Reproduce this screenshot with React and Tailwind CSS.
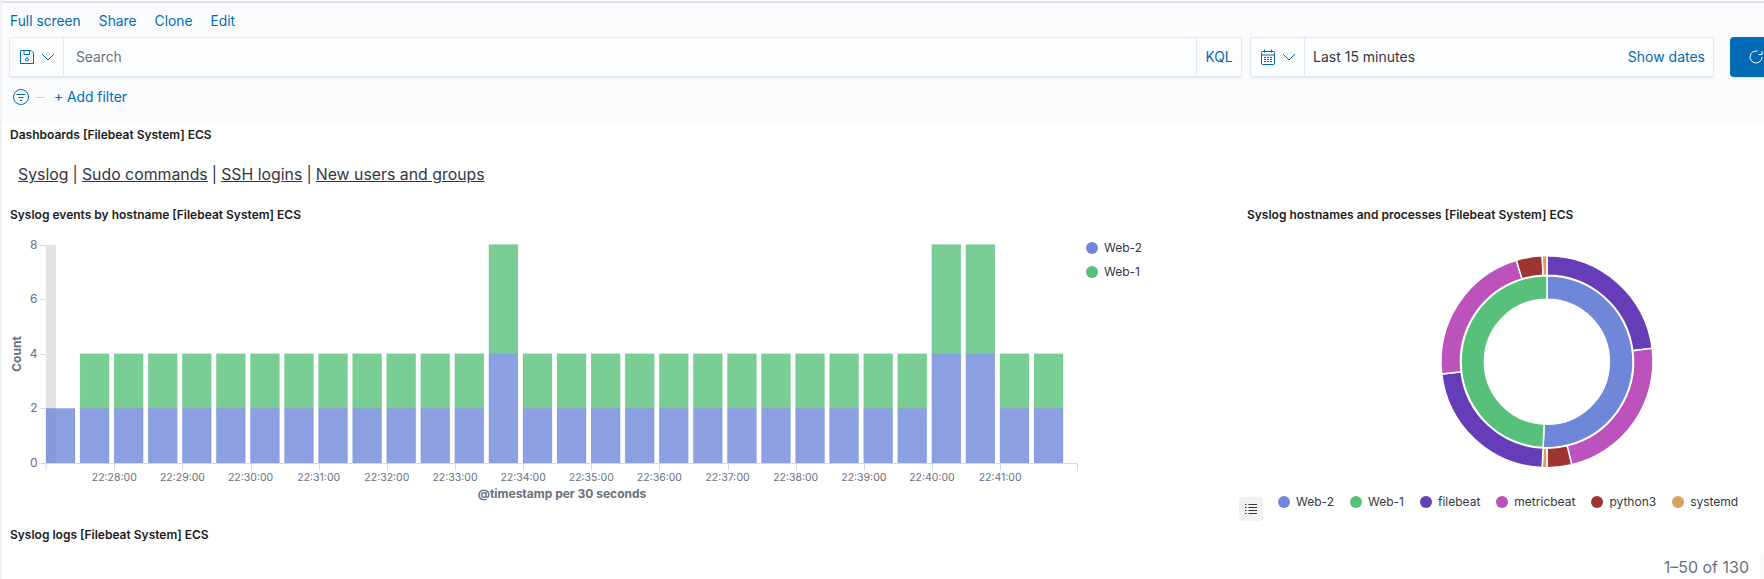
import React from "react";

const BLUE = "#6f87d8";
const GREEN = "#57c17b";
const PURPLE = "#663db8";
const PINK = "#bc52bc";
const RED = "#9e3533";
const ORANGE = "#daa05d";

const heights = Array.from({ length: 30 }, (_, i) => (i === 0 ? 2 : i === 13 || i === 26 || i === 27 ? 8 : 4));
const ticks = Array.from({ length: 14 }, (_, i) => ({
  x: 114.3 + i * 68.14,
  label: `22:${28 + i}:00`,
}));

function arc(cx, cy, r0, r1, a0, a1) {
  const p = (r, a) => {
    const t = (a * Math.PI) / 180;
    return `${(cx + r * Math.sin(t)).toFixed(2)} ${(cy - r * Math.cos(t)).toFixed(2)}`;
  };
  const large = a1 - a0 > 180 ? 1 : 0;
  return `M${p(r1, a0)}A${r1} ${r1} 0 ${large} 1 ${p(r1, a1)}L${p(r0, a1)}A${r0} ${r0} 0 ${large} 0 ${p(r0, a0)}Z`;
}

const innerRing = [
  [0, 182.6, BLUE],
  [182.6, 360, GREEN],
];
const outerRing = [
  [0, 82.7, PURPLE],
  [82.7, 166.5, PINK],
  [166.5, 180, RED],
  [180, 182.6, ORANGE],
  [182.6, 263.3, PURPLE],
  [263.3, 343.2, PINK],
  [343.2, 357.4, RED],
  [357.4, 360, ORANGE],
];

const legend = [
  ["Web-2", BLUE],
  ["Web-1", GREEN],
  ["filebeat", PURPLE],
  ["metricbeat", PINK],
  ["python3", RED],
  ["systemd", ORANGE],
];

function SaveIcon() {
  return (
    <svg width="16" height="16" viewBox="0 0 16 16" fill="none" stroke="#006bb4" strokeWidth="1">
      <path d="M2 1.5h10l2.500 2.500v10.500H1.500V2a.5.5 0 0 1 .5-.5z" />
      <path d="M5 1.500v4h5.500v-4" />
      <circle cx="8" cy="10.500" r="1.500" />
    </svg>
  );
}

function Chevron() {
  return (
    <svg width="14" height="8" viewBox="0 0 14 8" fill="none" stroke="#006bb4" strokeWidth="1">
      <path d="M1 1l6 6 6-6" />
    </svg>
  );
}

function CalendarIcon() {
  return (
    <svg width="16" height="16" viewBox="0 0 16 16" fill="none" stroke="#006bb4" strokeWidth="1">
      <rect x="1.500" y="2.500" width="13" height="13" rx="1" />
      <path d="M1.500 6h13M4.500 .5v3M11.500 .5v3" />
      <path d="M4 8.500h8M4 10.500h8M4 12.500h8" strokeDasharray="2 1" />
    </svg>
  );
}

function FilterIcon() {
  return (
    <svg width="16" height="16" viewBox="0 0 16 16" fill="none" stroke="#006bb4" strokeWidth="1">
      <circle cx="8" cy="8" r="7.500" />
      <path d="M3.500 5.500h9M5.500 8.500h5M7 11.500h2" />
    </svg>
  );
}

function RefreshIcon() {
  return (
    <svg width="14" height="14" viewBox="0 0 14 14" fill="none" stroke="#ffffff" strokeWidth="1">
      <path d="M8.500 1.200A6 6 0 1 0 13 7" />
      <path d="M13 1v3.500H9.500" />
    </svg>
  );
}

function ListIcon() {
  return (
    <svg width="12" height="10" viewBox="0 0 12 10" fill="none" stroke="#343741" strokeWidth="1">
      <path d="M3.500 .5H12M3.500 3.500H12M3.500 6.500H12M3.500 9.500H12" />
      <path d="M0 .5h1.500M0 3.500h1.500M0 6.500h1.500M0 9.500h1.500" />
    </svg>
  );
}

function BarChart() {
  const y0 = 463;
  const u = 27.3;
  const tickFill = "#69707d";
  return (
    <svg width="1084" height="285" viewBox="2 228 1084 285" className="block shrink-0" style={{ fontFamily: "Inter, sans-serif" }}>
      <rect x="46" y="245" width="10" height="218" fill="#e3e3e3" />
      {heights.map((h, i) => {
        const x = 46 + i * 34.07;
        const blueH = Math.min(h, i === 0 ? 2 : h / 2) * u;
        const greenH = h * u - blueH;
        return (
          <g key={i}>
            {greenH > 0 && (
              <rect x={x} y={y0 - h * u} width="29" height={greenH} fill={GREEN} fillOpacity="0.8" stroke={GREEN} strokeOpacity="0.2" />
            )}
            <rect x={x} y={y0 - blueH} width="29" height={blueH} fill={BLUE} fillOpacity="0.8" stroke={BLUE} strokeOpacity="0.2" />
          </g>
        );
      })}
      <path d="M46 463.500H1077.500" stroke="#d3dae6" strokeWidth="1" />
      <path d="M46 463.500v7M1077.500 463.500v7" stroke="#d3dae6" strokeWidth="1" />
      {ticks.map((t) => (
        <g key={t.label}>
          <path d={`M${Math.round(t.x) + 0.5} 463.500v7`} stroke="#d3dae6" strokeWidth="1" />
          <text x={t.x} y="481" textAnchor="middle" fontSize="10.500" fill={tickFill}>
            {t.label}
          </text>
        </g>
      ))}
      {[0, 2, 4, 6, 8].map((v) => (
        <g key={v}>
          <path d={`M40 ${Math.round(y0 - v * u) + 0.5}H46`} stroke="#d3dae6" strokeWidth="1" />
          <text x="37.500" y={y0 - v * u + 4} textAnchor="end" fontSize="12" fill={tickFill}>
            {v}
          </text>
        </g>
      ))}
      <text x="562" y="498" textAnchor="middle" fontSize="12" fontWeight="700" fill={tickFill}>
        @timestamp per 30 seconds
      </text>
      <text transform="translate(20.500 354) rotate(-90)" textAnchor="middle" fontSize="12" fontWeight="700" fill={tickFill}>
        Count
      </text>
    </svg>
  );
}

function Donut() {
  const cx = 1547;
  const cy = 361.700;
  return (
    <svg width="240" height="240" viewBox="1427 241 240 240" className="block">
      {innerRing.map(([a, b, c]) => (
        <path key={a} d={arc(cx, cy, 62.5, 86, a, b)} fill={c} stroke="#fff" strokeWidth="1.500" />
      ))}
      {outerRing.map(([a, b, c]) => (
        <path key={a} d={arc(cx, cy, 86.500, 106, a, b)} fill={c} stroke="#fff" strokeWidth="1.500" />
      ))}
    </svg>
  );
}

export default function App() {
  return (
    <div className="flex h-[579px] w-full overflow-hidden bg-white font-['Inter',sans-serif] text-[#343741]">
      <div className="w-[2px] shrink-0 bg-[#f1f2f4]" />
      <div className="flex min-w-0 flex-1 flex-col">
        <div className="h-[3px] shrink-0 border-b-2 border-[#dfe2e9] bg-white" />

        <header className="h-[119px] shrink-0 bg-[#fafbfd] text-[13.8px] text-[#006bb4]">
          <nav className="flex h-[34px] items-center gap-[18px] pl-2 pt-[2px]">
            <a>Full screen</a>
            <a>Share</a>
            <a>Clone</a>
            <a>Edit</a>
          </nav>

          <div className="flex h-10 items-stretch pl-[7px]">
            <div className="flex h-10 w-[1233px] shrink-0 border border-[#e4e8f0] bg-[#fcfdfe] shadow-[0_2px_2px_-1px_rgba(152,162,179,0.25)]">
              <div className="flex w-[54px] items-center gap-[6px] border-r border-[#e4e8f0] pl-[9px]">
                <SaveIcon />
                <Chevron />
              </div>
              <div className="flex flex-1 items-center pl-3 text-[#69707d]">Search</div>
              <div className="flex w-[45px] items-center justify-center border-l border-[#e4e8f0]">KQL</div>
            </div>

            <div className="ml-2 flex h-10 w-[464px] shrink-0 border border-[#e4e8f0] bg-[#fcfdfe] text-sm shadow-[0_2px_2px_-1px_rgba(152,162,179,0.25)]">
              <div className="flex w-[54px] items-center gap-[6px] border-r border-[#e4e8f0] pl-[9px]">
                <CalendarIcon />
                <Chevron />
              </div>
              <div className="flex flex-1 items-center justify-between pl-2 pr-2">
                <span className="text-[#343741]">Last 15 minutes</span>
                <span>Show dates</span>
              </div>
            </div>

            <button className="ml-4 flex h-10 w-[112px] shrink-0 items-center rounded-[4px] bg-[#006bb4] pl-[19px] shadow-[0_2px_2px_-1px_rgba(152,162,179,0.3)]">
              <RefreshIcon />
            </button>
          </div>

          <div className="flex h-10 items-center pl-[11px]">
            <FilterIcon />
            <span className="ml-[6px] h-px w-[10px] bg-[#d3dae6]" />
            <a className="ml-[9px]">+ Add filter</a>
          </div>
        </header>

        <div className="flex h-[26px] shrink-0 items-center pl-2 text-xs font-semibold text-[#1a1c21]">
          Dashboards [Filebeat System] ECS
        </div>

        <div className="flex h-[54px] shrink-0 items-center whitespace-pre pl-[16px] text-[15.85px] text-[#343741]">
          <a className="underline">Syslog</a>
          <span className="-mx-[0.4px]"> | </span>
          <a className="underline">Sudo commands</a>
          <span className="-mx-[0.4px]"> | </span>
          <a className="underline">SSH logins</a>
          <span className="-mx-[0.4px]"> | </span>
          <a className="underline">New users and groups</a>
        </div>

        <div className="flex h-[320px] shrink-0">
          <section className="w-[1245px] shrink-0">
            <h2 className="flex h-[26px] items-center pl-2 text-xs font-semibold text-[#1a1c21]">
              Syslog events by hostname [Filebeat System] ECS
            </h2>
            <div className="flex">
              <BarChart />
              <ul className="mt-3 flex flex-col gap-[9px] text-xs">
                <li className="flex h-[15px] items-center gap-[6px]">
                  <span className="h-3 w-3 rounded-full bg-[#6f87d8]" />
                  Web-2
                </li>
                <li className="flex h-[15px] items-center gap-[6px]">
                  <span className="h-3 w-3 rounded-full bg-[#57c17b]" />
                  Web-1
                </li>
              </ul>
            </div>
          </section>

          <section className="flex-1">
            <h2 className="flex h-[26px] items-center text-xs font-semibold text-[#1a1c21]">
              Syslog hostnames and processes [Filebeat System] ECS
            </h2>
            <div className="ml-[180px] mt-[13px]">
              <Donut />
            </div>
            <div className="mt-[16px] flex items-center">
              <button className="-ml-2 flex h-6 w-6 items-center justify-center rounded-[4px] bg-[#f0f2f2]">
                <ListIcon />
              </button>
              <ul className="-mt-[14px] ml-[15px] flex gap-4 text-xs">
                {legend.map(([name, color]) => (
                  <li key={name} className="flex items-center gap-[6px]">
                    <span className="h-3 w-3 rounded-full" style={{ backgroundColor: color }} />
                    {name}
                  </li>
                ))}
              </ul>
            </div>
          </section>
        </div>

        <h2 className="flex h-[26px] shrink-0 items-center pl-2 text-xs font-semibold text-[#1a1c21]">
          Syslog logs [Filebeat System] ECS
        </h2>

        <div className="flex h-[37px] shrink-0 items-center justify-end text-base text-[#69707d]">
          <span>1–50 of 130</span>
          <span className="ml-[11px] mt-[5px] w-1 self-stretch bg-[#f8f9fb]" />
        </div>
      </div>
    </div>
  );
}
